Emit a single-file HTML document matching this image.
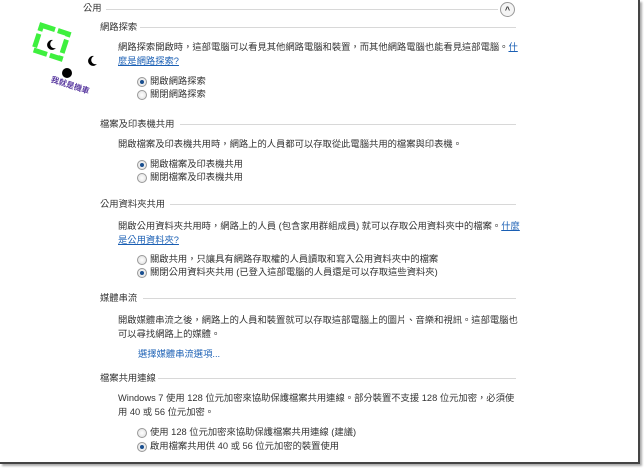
<!DOCTYPE html>
<html><head><meta charset="utf-8"><style>
body{margin:0;width:644px;height:468px;background:#fff;position:relative;overflow:hidden;font-family:"Liberation Sans","Noto Sans CJK TC",sans-serif;font-size:9.3px;color:#333}
.a{position:absolute;white-space:nowrap;line-height:14px}
.hl{position:absolute;height:1px;background:#d8d8d8}
.l{color:#1a5fb4;text-decoration:underline}
.r{position:absolute;width:8px;height:8px;border-radius:50%;border:1px solid #999;background:radial-gradient(#fff,#ddd)}
.r.on::after{content:"";position:absolute;left:2px;top:2px;width:4px;height:4px;border-radius:50%;background:#1a4f8f}
</style></head><body>
<div style="position:absolute;left:0;top:0;width:638px;height:462px;border-right:2px solid #444;border-bottom:2px solid #444;box-shadow:2px 2px 2px #aaa"></div>

<div class="a" style="left:83px;top:1px">公用</div><div class="hl" style="left:106px;top:9px;width:392px"></div>
<div style="position:absolute;left:500px;top:2px;width:13px;height:13px;border-radius:50%;border:1px solid #999;background:#f4f4f4;font-size:9px;text-align:center;line-height:14px;font-weight:bold">^</div>

<svg style="position:absolute;left:28px;top:22px" width="80" height="75" viewBox="0 0 80 75">
<g transform="rotate(18 23 20)"><rect x="9" y="7" width="28" height="26" fill="none" stroke="#3ef03e" stroke-width="5" stroke-dasharray="14 3"/></g>
<path d="M25 18a5 5 0 1 0 3 8a4 4 0 1 1 -3 -8z" fill="#000"/>
<path d="M66 34a5 5 0 1 0 3 8a4 4 0 1 1 -3 -8z" fill="#000"/>
<circle cx="39" cy="51" r="5" fill="#000"/>
<text x="22" y="64" font-size="8" fill="#5a3aa0" transform="rotate(18 36 63)" font-family="Noto Sans CJK TC,sans-serif" font-weight="bold">我就是機車</text>
</svg>

<div class="a" style="left:100px;top:20px">網路探索</div><div class="hl" style="left:140px;top:27px;width:376px"></div>
<div class="a" style="left:118px;top:40px">網路探索開啟時，這部電腦可以看見其他網路電腦和裝置，而其他網路電腦也能看見這部電腦。<span class="l">什</span></div>
<div class="a l" style="left:118px;top:54px">麼是網路探索?</div>
<div class="r on" style="left:137px;top:77px"></div><div class="a" style="left:150px;top:74px">開啟網路探索</div>
<div class="r" style="left:137px;top:90px"></div><div class="a" style="left:150px;top:87px">關閉網路探索</div>

<div class="a" style="left:100px;top:117px">檔案及印表機共用</div><div class="hl" style="left:180px;top:124px;width:336px"></div>
<div class="a" style="left:118px;top:137px">開啟檔案及印表機共用時，網路上的人員都可以存取從此電腦共用的檔案與印表機。</div>
<div class="r on" style="left:137px;top:160px"></div><div class="a" style="left:150px;top:157px">開啟檔案及印表機共用</div>
<div class="r" style="left:137px;top:173px"></div><div class="a" style="left:150px;top:170px">關閉檔案及印表機共用</div>

<div class="a" style="left:100px;top:197px">公用資料夾共用</div><div class="hl" style="left:170px;top:204px;width:346px"></div>
<div class="a" style="left:118px;top:219px">開啟公用資料夾共用時，網路上的人員 (包含家用群組成員) 就可以存取公用資料夾中的檔案。<span class="l">什麼</span></div>
<div class="a l" style="left:118px;top:233px">是公用資料夾?</div>
<div class="r" style="left:137px;top:255px"></div><div class="a" style="left:150px;top:252px">關啟共用，只讓具有網路存取權的人員讀取和寫入公用資料夾中的檔案</div>
<div class="r on" style="left:137px;top:268px"></div><div class="a" style="left:150px;top:265px">關閉公用資料夾共用 (已登入這部電腦的人員還是可以存取這些資料夾)</div>

<div class="a" style="left:100px;top:291px">媒體串流</div><div class="hl" style="left:143px;top:298px;width:373px"></div>
<div class="a" style="left:118px;top:313px">開啟媒體串流之後，網路上的人員和裝置就可以存取這部電腦上的圖片、音樂和視訊。這部電腦也</div>
<div class="a" style="left:118px;top:327px">可以尋找網路上的媒體。</div>
<div class="a" style="left:138px;top:347px;color:#1a5fb4">選擇媒體串流選項...</div>

<div class="a" style="left:100px;top:371px">檔案共用連線</div><div class="hl" style="left:158px;top:378px;width:358px"></div>
<div class="a" style="left:118px;top:391px">Windows 7 使用 128 位元加密來協助保護檔案共用連線。部分裝置不支援 128 位元加密，必須使</div>
<div class="a" style="left:118px;top:405px">用 40 或 56 位元加密。</div>
<div class="r" style="left:137px;top:428px"></div><div class="a" style="left:150px;top:425px">使用 128 位元加密來協助保護檔案共用連線 (建議)</div>
<div class="r on" style="left:137px;top:442px"></div><div class="a" style="left:150px;top:439px">啟用檔案共用供 40 或 56 位元加密的裝置使用</div>
</body></html>
